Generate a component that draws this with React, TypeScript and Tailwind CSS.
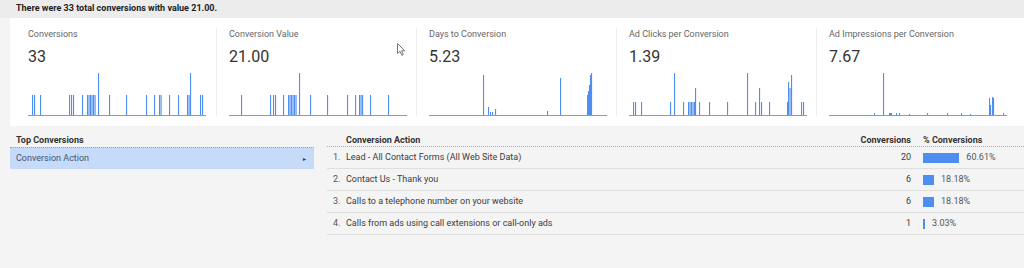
import React from "react";

type Spike = [number, number];

const N = 20;
const T = 42;

const charts: { label: string; value: string; spikes: Spike[] }[] = [
  {
    label: "Conversions",
    value: "33",
    spikes: [
      [4, N], [6, N], [12, N], [41, N], [43, N], [45, N], [54, N],
      [59, N], [60.5, N], [62, N], [63.5, N], [65, N], [66.5, N],
      [70, T], [81, N], [98, N], [118, N], [126, N], [131, N], [132.5, N],
      [141, N], [150, N], [159, N], [160.5, N], [162, T], [172, N], [174, N],
    ],
  },
  {
    label: "Conversion Value",
    value: "21.00",
    spikes: [
      [12, N], [41, N], [44, N], [46, N], [54, N],
      [59, N], [60.5, N], [62, N], [63.5, N], [65, N], [66.5, N],
      [70, T], [81, N], [98, N], [118, N], [126, N], [130, N], [131.5, N], [133, N],
      [141, N], [159, N],
    ],
  },
  {
    label: "Days to Conversion",
    value: "5.23",
    spikes: [
      [54, 40], [59, 8], [61, 3], [63, 3], [66, 6], [118, 4], [131, 37],
      [158, 20], [159, 24], [160, 30], [161, 40], [162, 42],
    ],
  },
  {
    label: "Ad Clicks per Conversion",
    value: "1.39",
    spikes: [
      [4, 13], [6, 13], [12, 13], [41, 13], [45, T], [54, 13],
      [59, 13], [60.5, 13], [62, 13], [63.5, 13], [65, 13], [66, 27],
      [70, 13], [80, 13], [98, 13], [118, T], [126, 13], [130, 27], [132, 13], [140, 13],
      [158, 13], [159, 33], [160.5, 27], [162, 40], [172, 13], [174, 13],
    ],
  },
  {
    label: "Ad Impressions per Conversion",
    value: "7.67",
    spikes: [
      [45, 2], [54, T], [60, 2], [61, 2], [62, 2], [67, 2], [70, 2], [80, 1],
      [98, 2], [118, 2], [132, 2], [141, 1], [160, 17], [161, 10], [163, 18],
      [164, 17], [174, 2],
    ],
  },
];

const rows = [
  { name: "Lead - All Contact Forms (All Web Site Data)", count: 20, pct: 60.61 },
  { name: "Contact Us - Thank you", count: 6, pct: 18.18 },
  { name: "Calls to a telephone number on your website", count: 6, pct: 18.18 },
  { name: "Calls from ads using call extensions or call-only ads", count: 1, pct: 3.03 },
];

function Sparkline({ spikes }: { spikes: Spike[] }) {
  return (
    <svg width="178" height="44" viewBox="0 0 178 44" className="block">
      {spikes.map(([x, h], i) => (
        <rect key={i} x={x} y={43 - h} width="1.1" height={h} fill="#4d8ef0" />
      ))}
      <rect x="0" y="43" width="178" height="1" fill="#6a9ef2" />
    </svg>
  );
}

export default function App() {
  return (
    <div className="relative w-[1024px] h-[268px] overflow-hidden bg-[#f4f4f4] font-['Roboto',sans-serif]">
      <div className="h-[18px] bg-[#ececec] pl-4 pt-[2px] text-[9px] leading-[13px] font-bold text-[#222]">
        There were 33 total conversions with value 21.00.
      </div>

      <div className="ml-[10px] h-[108px] bg-white pl-[6px] flex">
        {charts.map((c, i) => (
          <div
            key={c.label}
            className={`w-[200px] mt-[10px] h-[88px] pl-3 ${i > 0 ? "border-l border-[#ececec]" : ""}`}
          >
            <div className="text-[9px] leading-[12px] text-[#666]">{c.label}</div>
            <div className="mt-[7px] text-[16px] leading-[20px] text-[#333]">{c.value}</div>
            <div className="mt-[5px]">
              <Sparkline spikes={c.spikes} />
            </div>
          </div>
        ))}
      </div>

      <div className="flex">
        <div className="ml-[10px] w-[304px]">
          <div className="pl-[6px] pt-[8px] text-[9px] leading-[12px] font-bold text-[#333]">
            Top Conversions
          </div>
          <div className="mt-[1px] h-[22px] bg-[#c6dbfa] border-t border-dotted border-[#8fa2c0] flex items-center justify-between pl-[6px] pr-[8px] text-[9px] text-[#44546e]">
            <span>Conversion Action</span>
            <span className="text-[6px] text-[#333]">▸</span>
          </div>
        </div>

        <div className="ml-[13px] flex-1 text-[9px] text-[#3c3c3c]">
          <div className="flex pt-[8px] leading-[12px] font-bold text-[#333] border-b border-dotted border-[#aaa]">
            <div className="flex-1 pl-[19px]">Conversion Action</div>
            <div className="w-[80px] text-right">Conversions</div>
            <div className="w-[113px] pl-[12px]">% Conversions</div>
          </div>
          {rows.map((r, i) => (
            <div key={r.name} className="flex items-center h-[22px] border-b border-[#dedede]">
              <div className="flex-1 flex pl-[6px]">
                <span className="w-[13px] text-[#555]">{i + 1}.</span>
                <span>{r.name}</span>
              </div>
              <div className="w-[80px] text-right">{r.count}</div>
              <div className="w-[113px] pl-[12px] flex items-center gap-[7px] text-[#555]">
                <div className="h-[10px] bg-[#4d8ef0]" style={{ width: Math.max(r.pct * 0.6, 2) }} />
                <span>{r.pct.toFixed(2)}%</span>
              </div>
            </div>
          ))}
        </div>
      </div>

      <svg className="absolute left-[397px] top-[43px]" width="9" height="13" viewBox="0 0 9 13">
        <path d="M0.5 0.5 L0.5 10.5 L3 8.3 L4.8 12.3 L6.3 11.6 L4.6 7.8 L7.8 7.8 Z" fill="white" stroke="#555" strokeWidth="0.8" />
      </svg>
    </div>
  );
}
